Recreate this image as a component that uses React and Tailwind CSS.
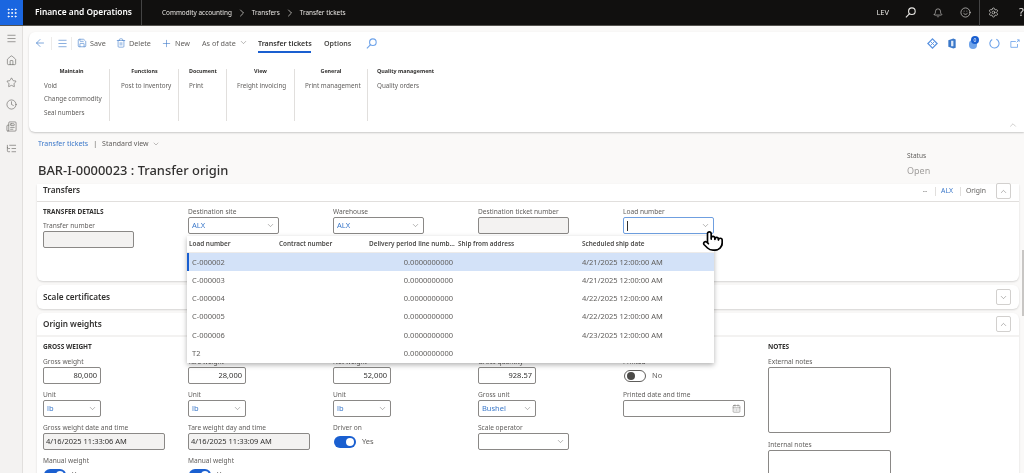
import React from 'react';
import {
  ArrowLeft, Bell, CalendarDays, ChevronDown, ChevronRight, ChevronUp, Clock, Grip, Home, ListTree,
  Menu, Newspaper, Plus, Pointer, Save, Settings, Smile, Star, Trash2,
} from 'lucide-react';

const groups = [
  { title: 'Maintain', items: ['Void', 'Change commodity', 'Seal numbers'], width: 'w-[81px]', pad: 'pl-[15px]', center: true },
  { title: 'Functions', items: ['Post to inventory'], width: 'w-[69px]', pad: 'pl-[11px]', center: true },
  { title: 'Document', items: ['Print'], width: 'w-[48px]', pad: 'pl-[10px]' },
  { title: 'View', items: ['Freight invoicing'], width: 'w-[68px]', pad: 'pl-[10px]', center: true },
  { title: 'General', items: ['Print management'], width: 'w-[73px]', pad: 'pl-[10px]', center: true },
  { title: 'Quality management', items: ['Quality orders'], width: 'w-[100px]', pad: 'pl-[9px]', last: true },
];

const tickets = [
  ['C-000002', '4/21/2025 12:00:00 AM'],
  ['C-000003', '4/21/2025 12:00:00 AM'],
  ['C-000004', '4/22/2025 12:00:00 AM'],
  ['C-000005', '4/22/2025 12:00:00 AM'],
  ['C-000006', '4/23/2025 12:00:00 AM'],
  ['T2', ''],
];

// search glass with the handle running to the lower left
const Glass = ({ className }) => (
  <svg width="11" height="11" viewBox="0 0 12 12" fill="none" stroke="currentColor" strokeWidth="1.2" className={className}>
    <circle cx="7.5" cy="4.5" r="3.6" />
    <path d="M5 7.2 1 11.2" />
  </svg>
);

const Field = ({ label, children }) => (
  <div className="flex flex-col">
    <div className="h-[10px] text-[6.6px] leading-[10px] text-[#605e5c] whitespace-nowrap">{label}</div>
    {children}
  </div>
);

const Box = ({ w = 'w-[91px]', disabled, align, children, focus }) => (
  <div
    className={`${w} h-[17px] rounded-[2px] border flex items-center px-[3px] text-[7.5px] text-[#323130] whitespace-nowrap ${
      focus ? 'border-[#6f9fe0]' : 'border-[#8a8886]'
    } ${disabled ? 'bg-[#f3f2f1]' : 'bg-white'} ${align === 'right' ? 'justify-end' : ''}`}
  >
    {children}
  </div>
);

const SelectBox = ({ value, w }) => (
  <Box w={w}>
    <span className="flex-1 text-[#3b78c9]">{value}</span>
    <ChevronDown size={9} strokeWidth={1.2} className="text-[#605e5c]" />
  </Box>
);

const Toggle = ({ on, label }) => (
  <div className="flex items-center gap-[6px] h-[17px] pl-[1px]">
    <div
      className={`w-[22px] h-[12px] rounded-full flex items-center px-[2px] ${
        on ? 'bg-[#1a5fd0] justify-end' : 'bg-white border border-[#605e5c]'
      }`}
    >
      <div className={`w-[8px] h-[8px] rounded-full ${on ? 'bg-white' : 'bg-[#4b4a48]'}`} />
    </div>
    <span className="text-[7.5px] text-[#605e5c]">{label}</span>
  </div>
);

const Heading = ({ children }) => (
  <div className="h-[10px] text-[6.5px] leading-[10px] font-bold text-[#323130] whitespace-nowrap">{children}</div>
);

const Collapse = ({ up }) => (
  <div className="w-[15px] h-[16px] rounded-[2px] border border-[#d2d0ce] bg-white flex items-center justify-center text-[#605e5c]">
    {up ? <ChevronUp size={9} strokeWidth={1.2} /> : <ChevronDown size={9} strokeWidth={1.2} />}
  </div>
);

const Cmd = ({ icon, label, w }) => (
  <div className={`flex items-center gap-[3px] text-[7.2px] text-[#605e5c] ${w}`}>
    {icon}
    <span>{label}</span>
  </div>
);

const App = () => {
  return (
    <div className="relative w-[1024px] h-[473px] overflow-hidden flex flex-col bg-[#faf9f8] blur-[0.35px] font-['Noto_Sans',sans-serif]">
      {/* top bar */}
      <header className="h-[26px] shrink-0 bg-[#11100f] border-b border-[#55534f] flex items-center text-white">
        <div className="w-[23px] h-full bg-[#1a66e0] flex items-center justify-center">
          <Grip size={12} />
        </div>
        <div className="w-[119px] h-full pl-[12px] flex items-center border-r border-[#444] text-[8.4px] font-semibold whitespace-nowrap">
          Finance and Operations
        </div>
        <nav className="ml-[20px] flex items-center text-[6.4px] text-[#e8e6e3]">
          <span>Commodity accounting</span>
          <ChevronRight size={12} strokeWidth={1.4} className="mx-[4px]" />
          <span>Transfers</span>
          <ChevronRight size={12} strokeWidth={1.4} className="mx-[4px]" />
          <span>Transfer tickets</span>
        </nav>
        <div className="ml-auto flex items-center text-[#e8e6e3]">
          <span className="text-[7.5px] mr-[16px]">LEV</span>
          <Glass className="mr-[17px]" />
          <Bell size={10} strokeWidth={1.4} className="mr-[17px]" />
          <Smile size={11} strokeWidth={1.4} className="mr-[8px]" />
          <div className="w-px h-[26px] bg-[#444] mr-[8px]" />
          <Settings size={11} strokeWidth={1.4} className="mr-[20px]" />
          <span className="w-[5px] text-[11px] overflow-hidden">?</span>
        </div>
      </header>

      <div className="flex flex-1 min-h-0">
        {/* left rail */}
        <aside className="w-[23px] shrink-0 bg-[#f3f2f1] border-r border-[#e1dfdd] flex flex-col items-center pt-[7px] gap-[11px] text-[#605e5c]">
          <Menu size={11} strokeWidth={1.3} />
          <Home size={11} strokeWidth={1.3} />
          <Star size={11} strokeWidth={1.3} />
          <Clock size={11} strokeWidth={1.3} />
          <Newspaper size={11} strokeWidth={1.3} />
          <ListTree size={11} strokeWidth={1.3} />
        </aside>

        <main className="flex-1 min-w-0 pt-[6px] pl-[6px]">
          {/* action pane */}
          <section className="relative h-[100px] bg-white rounded-l-[6px] shadow-[0_1px_2px_rgba(0,0,0,0.2)]">
            <div className="h-[22px] flex items-center text-[#605e5c]">
              <ArrowLeft size={12} strokeWidth={1.3} className="ml-[5px] text-[#3b78c9]" />
              <div className="w-px h-[13px] bg-[#edebe9] ml-[5px]" />
              <Menu size={11} strokeWidth={1.3} className="ml-[5px] text-[#3b78c9]" />
              <div className="w-px h-[13px] bg-[#edebe9] ml-[3px]" />
              <Cmd w="ml-[5px] w-[39px]" label="Save" icon={<Save size={10} strokeWidth={1.4} className="text-[#3b78c9]" />} />
              <Cmd w="w-[45px]" label="Delete" icon={<Trash2 size={10} strokeWidth={1.4} className="text-[#3b78c9]" />} />
              <Cmd w="w-[41px]" label="New" icon={<Plus size={11} strokeWidth={1.3} className="text-[#3b78c9]" />} />
              <div className="flex items-center gap-[3px] text-[7.2px] w-[56px] whitespace-nowrap">
                As of date <ChevronDown size={9} strokeWidth={1.2} />
              </div>
              <div className="relative w-[66px] text-[7.1px] font-semibold text-[#323130] whitespace-nowrap">
                Transfer tickets
                <div className="absolute left-0 top-[13px] w-[53px] h-[2px] bg-[#1a5fd0]" />
              </div>
              <span className="text-[7.1px] font-semibold text-[#4b4a48]">Options</span>
              <Glass className="ml-[15px] text-[#6ea3ea]" />
            </div>

            <div className="flex mt-[15px]">
              {groups.map((g) => (
                <div key={g.title} className={`${g.width} ${g.pad} h-[52px] ${g.last ? '' : 'border-r border-[#e1dfdd]'}`}>
                  <div className={`text-[5.4px] leading-[4px] font-bold text-[#323130] whitespace-nowrap ${g.center ? 'text-center pr-[10px]' : ''}`}>
                    {g.title}
                  </div>
                  <div className="mt-[5.5px] flex flex-col">
                    {g.items.map((i) => (
                      <div key={i} className="h-[13.5px] text-[6.3px] leading-[13px] text-[#605e5c] whitespace-nowrap">{i}</div>
                    ))}
                  </div>
                </div>
              ))}
            </div>

            {/* right side command icons */}
            <div className="absolute right-0 top-[6px] flex items-center text-[#3b78c9]">
              <svg width="11" height="11" viewBox="0 0 12 12" className="mr-[9px]" fill="none" stroke="#5b93e0" strokeWidth="1.4">
                <path d="M6 1 11 6 6 11 1 6Z" />
                <path d="M4 4l4 4M8 4 4 8" strokeWidth="1" />
              </svg>
              <svg width="10" height="11" viewBox="0 0 10 12" className="mr-[12px]">
                <path d="M1 2.5 6.5.5l2.5 1v9l-2.5 1L1 9.5Z" fill="#3b78c9" />
                <path d="M4 3h2.5v6H4Z" fill="#dfe9f7" />
              </svg>
              <div className="relative w-[8px] h-[11px] mr-[12px]">
                <div className="absolute inset-0 top-[2px] rounded-b-[4px] rounded-tl-[4px] bg-[#6ea3ea]" />
                <div className="absolute -top-[2px] left-[2px] w-[8px] h-[8px] rounded-full bg-[#1a5fd0] text-white text-[5px] leading-[8px] text-center">0</div>
              </div>
              <svg width="11" height="11" viewBox="0 0 12 12" className="mr-[10px]" fill="none" stroke="#6ea3ea" strokeWidth="1.2">
                <path d="M3.5 1.6A5 5 0 1 0 8 1.4" />
              </svg>
              <svg width="10" height="10" viewBox="0 0 12 12" className="mr-[4px]" fill="none" stroke="#6ea3ea" strokeWidth="1">
                <path d="M7 3H1v7h8V6M8 4l3-3M8.5 1H11v2.5" />
              </svg>
            </div>
            <ChevronUp size={10} strokeWidth={1.2} className="absolute right-[6px] bottom-[2px] text-[#a19f9d]" />
          </section>

          {/* page header */}
          <div className="relative h-[52px] pl-[9px] pt-[7px]">
            <div className="flex items-center text-[7px] h-[10px] text-[#605e5c]">
              <span className="text-[#3b78c9]">Transfer tickets</span>
              <span className="mx-[5px]">|</span>
              <span>Standard view</span>
              <ChevronDown size={8} strokeWidth={1.2} className="ml-[3px]" />
            </div>
            <h1 className="mt-[13px] text-[12.9px] leading-[16px] font-medium text-[#323130] whitespace-nowrap">BAR-I-0000023 : Transfer origin</h1>
            <div className="absolute left-[878px] top-[19px]">
              <div className="text-[6.5px] leading-[10px] text-[#605e5c]">Status</div>
              <div className="mt-[5px] text-[9px] leading-[10px] text-[#a19f9d]">Open</div>
            </div>
          </div>

          <div className="ml-[8px] w-[982px] flex flex-col gap-[4px]">
            {/* transfers card */}
            <section className="bg-white rounded-b-[6px] shadow-[0_1px_2px_rgba(0,0,0,0.15)]">
              <div className="h-[18px] pl-[6px] pr-[8px] flex items-start border-b border-[#e1dfdd]">
                <span className="text-[8.2px] leading-[11px] font-semibold text-[#323130]">Transfers</span>
                <div className="ml-auto flex items-center text-[6.8px] text-[#605e5c]">
                  <span>--</span>
                  <span className="w-px h-[9px] bg-[#e1dfdd] ml-[8px] mr-[5px]" />
                  <span className="text-[#3b78c9]">ALX</span>
                  <span className="w-px h-[9px] bg-[#e1dfdd] ml-[7px] mr-[5px]" />
                  <span>Origin</span>
                  <div className="ml-[10px] -mt-[1px]"><Collapse up /></div>
                </div>
              </div>
              <div className="h-[79px] pl-[6px] pt-[5px] flex">
                <div className="w-[145px] flex flex-col gap-[4px]">
                  <Heading>TRANSFER DETAILS</Heading>
                  <Field label="Transfer number"><Box disabled /></Field>
                </div>
                <div className="w-[145px]"><Field label="Destination site"><SelectBox value="ALX" /></Field></div>
                <div className="w-[145px]"><Field label="Warehouse"><SelectBox value="ALX" /></Field></div>
                <div className="w-[145px]"><Field label="Destination ticket number"><Box disabled /></Field></div>
                <div className="w-[145px]">
                  <Field label="Load number">
                    <Box focus>
                      <span className="w-px h-[10px] bg-[#323130]" />
                      <ChevronDown size={9} strokeWidth={1.2} className="ml-auto text-[#605e5c]" />
                    </Box>
                  </Field>
                </div>
              </div>
            </section>

            {/* scale certificates */}
            <section className="h-[24px] bg-white rounded-[6px] shadow-[0_1px_2px_rgba(0,0,0,0.15)] pl-[6px] pr-[8px] flex items-center justify-between">
              <span className="text-[8.2px] font-semibold text-[#323130]">Scale certificates</span>
              <Collapse />
            </section>

            {/* origin weights */}
            <section className="bg-white rounded-t-[6px] shadow-[0_1px_2px_rgba(0,0,0,0.15)]">
              <div className="h-[24px] pl-[6px] pr-[8px] flex items-center justify-between border-b-2 border-[#f3f2f1]">
                <span className="text-[8.2px] font-semibold text-[#323130]">Origin weights</span>
                <Collapse up />
              </div>
              <div className="pl-[6px] pt-[5px] flex">
                <div className="w-[145px] flex flex-col">
                  <Heading>GROSS WEIGHT</Heading>
                  <div className="mt-[5px] flex flex-col gap-[6px]">
                    <Field label="Gross weight"><Box w="w-[58px]" align="right">80,000</Box></Field>
                    <Field label="Unit"><SelectBox w="w-[58px]" value="lb" /></Field>
                    <Field label="Gross weight date and time"><Box w="w-[122px]" disabled><span className="-ml-[1px]">4/16/2025 11:33:06 AM</span></Box></Field>
                    <Field label="Manual weight"><Toggle on label="Yes" /></Field>
                  </div>
                </div>
                <div className="w-[145px] pt-[15px] flex flex-col gap-[6px]">
                  <Field label="Tare weight"><Box w="w-[58px]" align="right">28,000</Box></Field>
                  <Field label="Unit"><SelectBox w="w-[58px]" value="lb" /></Field>
                  <Field label="Tare weight day and time"><Box w="w-[122px]" disabled><span className="-ml-[1px]">4/16/2025 11:33:09 AM</span></Box></Field>
                  <Field label="Manual weight"><Toggle on label="Yes" /></Field>
                </div>
                <div className="w-[145px] pt-[15px] flex flex-col gap-[6px]">
                  <Field label="Net weight"><Box w="w-[58px]" align="right">52,000</Box></Field>
                  <Field label="Unit"><SelectBox w="w-[58px]" value="lb" /></Field>
                  <Field label="Driver on"><Toggle on label="Yes" /></Field>
                </div>
                <div className="w-[145px] pt-[15px] flex flex-col gap-[6px]">
                  <Field label="Gross quantity"><Box w="w-[58px]" align="right">928.57</Box></Field>
                  <Field label="Gross unit"><SelectBox w="w-[58px]" value="Bushel" /></Field>
                  <Field label="Scale operator"><SelectBox value="" /></Field>
                </div>
                <div className="w-[145px] pt-[15px] flex flex-col gap-[6px]">
                  <Field label="Printed"><Toggle label="No" /></Field>
                  <Field label="Printed date and time">
                    <Box w="w-[122px]">
                      <CalendarDays size={9} strokeWidth={1.2} className="ml-auto text-[#605e5c]" />
                    </Box>
                  </Field>
                </div>
                <div className="w-[125px] flex flex-col">
                  <Heading>NOTES</Heading>
                  <div className="mt-[5px] flex flex-col gap-[7px]">
                    <Field label="External notes"><div className="w-[123px] h-[66px] rounded-[2px] border border-[#8a8886]" /></Field>
                    <Field label="Internal notes"><div className="w-[123px] h-[66px] rounded-[2px] border border-[#8a8886]" /></Field>
                  </div>
                </div>
              </div>
            </section>
          </div>
        </main>
      </div>

      {/* load number lookup */}
      <div className="absolute left-[187px] top-[236px] w-[527px] h-[127px] bg-white shadow-[0_2px_5px_rgba(0,0,0,0.3)] text-[7.5px]">
        <div className="h-[17px] pl-[2px] grid grid-cols-[90px_90px_89px_124px_1fr] items-center text-[6.4px] font-semibold text-[#4b4a48] border-b border-[#edebe9] whitespace-nowrap">
          <span>Load number</span>
          <span>Contract number</span>
          <span>Delivery period line numb...</span>
          <span>Ship from address</span>
          <span>Scheduled ship date</span>
        </div>
        {tickets.map(([load, date], i) => (
          <div
            key={load}
            className={`relative h-[18.3px] pl-[5px] grid grid-cols-[182px_79px_129px_1fr] items-center text-[#605e5c] ${
              i === 0 ? 'bg-[#d3e2f8]' : ''
            }`}
          >
            {i === 0 && <div className="absolute left-0 top-0 bottom-0 w-[2px] bg-[#1a5fd0]" />}
            <span>{load}</span>
            <span className="text-right">0.0000000000</span>
            <span />
            <span>{date}</span>
          </div>
        ))}
      </div>

      {/* page scrollbar */}
      <div className="absolute right-0 top-[250px] w-[2px] h-[66px] bg-[#c8c6c4]" />

      {/* mouse pointer */}
      <Pointer size={22} strokeWidth={1.8} fill="white" className="absolute left-[702px] top-[230px] text-black" />
    </div>
  );
};

export default App;
